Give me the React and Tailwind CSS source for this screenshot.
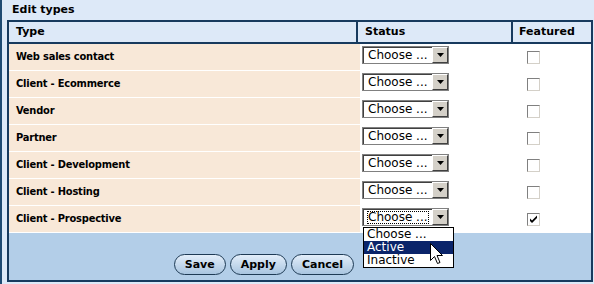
import React from "react";

const rows = [
    { name: "Web sales contact", featured: false },
    { name: "Client - Ecommerce", featured: false },
    { name: "Vendor", featured: false },
    { name: "Partner", featured: false },
    { name: "Client - Development", featured: false },
    { name: "Client - Hosting", featured: false },
    { name: "Client - Prospective", featured: true, open: true },
];

function Select({ focused }) {
    return (
        <div className="w-[87px] h-[18px] border border-[#808080] flex">
            <div className="flex-1 flex border-t border-l border-[#404040] bg-white">
                <div className="flex-1 flex items-center pl-[3px]">
                    <span className={"leading-[13px] px-[1px] " + (focused ? "outline outline-1 outline-dotted outline-black -outline-offset-1" : "")}>
                        Choose ...
                    </span>
                </div>
                <div className="w-[16px] h-[16px] -mt-[1px] bg-[#d4d0c8] border-t border-l border-white border-r border-b border-r-[#404040] border-b-[#404040] flex items-center justify-center">
                    <svg width="7" height="4" viewBox="0 0 7 4">
                        <path d="M0 0h7L3.5 4z" fill="#000" />
                    </svg>
                </div>
            </div>
        </div>
    );
}

function Checkbox({ checked }) {
    return (
        <div className="w-[13px] h-[13px] border border-[#808080] border-r-[#d4d0c8] border-b-[#d4d0c8] bg-white flex items-center justify-center">
            {checked && (
                <svg width="9" height="9" viewBox="0 0 9 9">
                    <path d="M1 3.5l2 2 5-5v2.5l-5 5-2-2z" fill="#000" />
                </svg>
            )}
        </div>
    );
}

export default function App() {
    return (
        <div
            className="w-[594px] h-[284px] bg-[#dde9f8] border-l-2 border-[#1e4a72] relative text-black"
            style={{ fontFamily: '"DejaVu Sans", Verdana, sans-serif' }}
        >
            {/* title */}
            <div className="h-[20px] pl-[10px] pt-[3px] text-[11px] font-bold leading-[14px]">Edit types</div>

            {/* table box */}
            <div className="ml-[5px] w-[586px] border-2 border-[#173a5e]">
                {/* header */}
                <div className="grid grid-cols-[349px_155px_1fr] h-[22px] bg-[#dde9f8] border-b-2 border-[#173a5e] text-[11px] font-bold">
                    <div className="pl-[7px] flex items-center border-r-2 border-[#173a5e]">Type</div>
                    <div className="pl-[7px] flex items-center border-r-2 border-[#173a5e]">Status</div>
                    <div className="pl-[6px] flex items-center">Featured</div>
                </div>

                {/* body */}
                {rows.map((row, i) => (
                    <div key={i} className="grid grid-cols-[351px_155px_1fr] h-[27px] bg-white">
                        <div
                            className="pl-[7px] flex items-center bg-[#f8e8d8] border-b border-white text-[11px] font-bold tracking-[-0.2px]"
                            style={{ fontFamily: '"DejaVu Sans Condensed", "DejaVu Sans", sans-serif' }}
                        >
                            {row.name}
                        </div>
                        <div className="pl-[2px] pt-[2px] flex items-start text-[12px]">
                            <Select focused={row.open} />
                        </div>
                        <div className="pl-[12px] flex items-center">
                            <Checkbox checked={row.featured} />
                        </div>
                    </div>
                ))}

                {/* footer */}
                <div className="h-[47px] bg-[#b3cee8] flex">
                    <div className="w-[351px] flex items-end justify-end gap-[4px] pr-[6px] pb-[5px]">
                        {["Save", "Apply", "Cancel"].map((label) => (
                            <button
                                key={label}
                                className="h-[21px] px-[10px] rounded-full border border-[#1f3b55] bg-gradient-to-b from-[#e3eefa] to-[#a9c5e0] text-[11px] font-bold leading-none"
                            >
                                {label}
                            </button>
                        ))}
                    </div>
                </div>
            </div>

            {/* open dropdown list */}
            <div className="absolute left-[361px] top-[227px] w-[91px] border border-black bg-white text-[12px] leading-[13px]">
                <div className="pl-[3px] h-[13px]">Choose ...</div>
                <div className="pl-[3px] h-[13px] bg-[#0a246a] text-white">Active</div>
                <div className="pl-[3px] h-[13px]">Inactive</div>
            </div>

            {/* mouse cursor */}
            <svg className="absolute left-[428px] top-[243px]" width="13" height="22" viewBox="0 0 13 22">
                <path
                    d="M0.5 0.5v17l4-4 3 7 2.5-1-3-7h5.5z"
                    fill="#fff"
                    stroke="#000"
                    strokeWidth="1"
                    strokeLinejoin="miter"
                />
            </svg>
        </div>
    );
}
